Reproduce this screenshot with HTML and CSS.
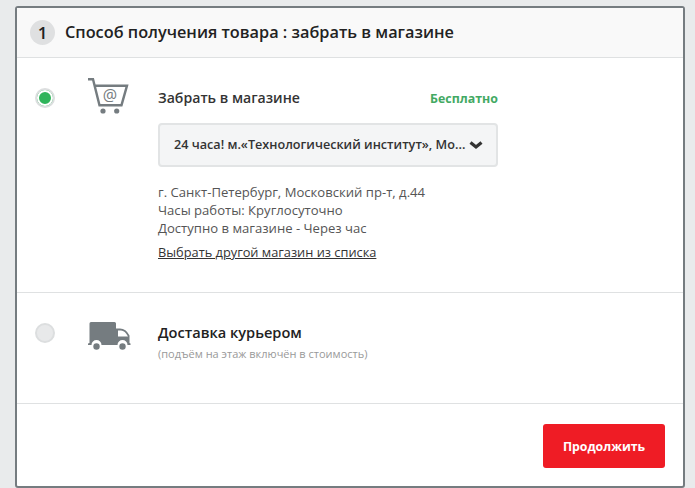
FILE: index.html
```html
<!DOCTYPE html>
<html lang="ru">
<head>
  <meta charset="UTF-8">
  <meta name="viewport" content="width=device-width, initial-scale=1.0">
  <title>Способ получения товара</title>
  <link rel="stylesheet" href="styles.css">
</head>
<body>
  <div class="card">
    <div class="card-header">
      <span class="step">1</span>
      <h2 class="card-title">Способ получения товара : забрать в магазине</h2>
    </div>

    <div class="option option-pickup">
      <span class="radio radio-on"></span>
      <svg class="icon-cart" width="42" height="38" viewBox="0 0 42 38">
        <path d="M1 1.200h5l6.500 26h22l5.500-19.500h-32" fill="none" stroke="#757c80" stroke-width="2.400"/>
        <circle cx="16" cy="33" r="2.600" fill="#757c80"/>
        <circle cx="29.700" cy="33" r="2.600" fill="#757c80"/>
        <text x="23" y="23" class="cart-at">@</text>
      </svg>
      <div class="option-body">
        <div class="option-head">
          <span class="option-title">Забрать в магазине</span>
          <span class="price">Бесплатно</span>
        </div>
        <div class="select">
          <span class="select-text">24 часа! м.«Технологический институт», Мо...</span>
          <svg class="select-arrow" width="14" height="10" viewBox="0 0 14 10">
            <path d="M1.500 2.500l5.500 4.500 5.500-4.500" fill="none" stroke="#333" stroke-width="3.200"/>
          </svg>
        </div>
        <div class="address">
          <div>г. Санкт-Петербург, Московский пр-т, д.44</div>
          <div>Часы работы: Круглосуточно</div>
          <div>Доступно в магазине - Через час</div>
        </div>
        <a class="other-shop" href="#">Выбрать другой магазин из списка</a>
      </div>
    </div>

    <div class="option option-courier">
      <span class="radio"></span>
      <svg class="icon-truck" width="44" height="30" viewBox="0 0 44 30">
        <path d="M2.500 2.500q0-1.500 1.500-1.500h23.500q1.500 0 1.500 1.500v5h4q6 0 9.500 7v7.500l1 .5v1.500h-3a5 5 0 0 0-10 0h-16a5 5 0 0 0-10 0h-3.500v-1.500l1.500-.5z" fill="#757c80"/>
        <path d="M31 9.500h3q4 0 7 6h-10z" fill="#fff"/>
        <circle cx="9.500" cy="25.500" r="3.200" fill="#757c80"/>
        <circle cx="35.500" cy="25.500" r="3.200" fill="#757c80"/>
      </svg>
      <div class="option-body option-body-courier">
        <div class="option-title option-title-lg">Доставка курьером</div>
        <div class="note">(подъём на этаж включён в стоимость)</div>
      </div>
    </div>

    <div class="card-footer">
      <button class="btn-next">Продолжить</button>
    </div>
  </div>
</body>
</html>
```

FILE: styles.css
```css
body {
  margin: 0;
  height: 488px;
  overflow: hidden;
  padding: 6px 10px 0 15px;
  box-sizing: border-box;
  background: #e9ebec;
  font-family: "Open Sans", sans-serif;
  color: #333;
}
.card {
  height: 482px;
  box-sizing: border-box;
  border: 2px solid #757c80;
  border-radius: 3px;
  background: #fff;
}
.card-header {
  display: flex;
  align-items: center;
  height: 50px;
  box-sizing: border-box;
  padding-left: 13px;
  background: #f9f9f9;
  border-bottom: 1px solid #dfe1e2;
}
.step {
  width: 25px;
  height: 25px;
  border-radius: 50%;
  margin-right: 10px;
  background: #dfe0e1;
  color: #222;
  font-size: 17px;
  font-weight: 600;
  line-height: 25px;
  text-align: center;
}
.card-title {
  margin: 0 0 2px;
  color: #222;
  font-size: 16.300px;
  font-weight: 600;
}
.option {
  display: flex;
  align-items: flex-start;
  box-sizing: border-box;
  padding-left: 18px;
  border-bottom: 1px solid #dfe1e2;
}
.option-pickup {
  height: 235px;
  padding-top: 20px;
}
.option-courier {
  height: 111px;
  padding-top: 28px;
}
.radio {
  flex: none;
  width: 20px;
  height: 20px;
  box-sizing: border-box;
  border: 2px solid #dcdedf;
  border-radius: 50%;
  background: #e8e9ea;
  margin-top: 10px;
}
.option-courier .radio {
  margin-top: 2px;
}
.radio-on {
  background: #2fb45a;
  box-shadow: inset 0 0 0 2px #fff;
}
.icon-cart {
  flex: none;
  margin: 0 29px 0 32px;
}
.icon-truck {
  flex: none;
  margin: 0 27px 0 32px;
}
.cart-at {
  fill: #757c80;
  font-size: 16px;
  text-anchor: middle;
}
.option-body {
  width: 340px;
}
.option-body-courier {
  margin-top: 1px;
}
.option-head {
  display: flex;
  justify-content: space-between;
  align-items: center;
  margin-top: 10px;
}
.option-title {
  color: #333;
  font-size: 14.100px;
  font-weight: 600;
  line-height: 20px;
}
.option-title-lg {
  color: #222;
  font-size: 14.600px;
}
.price {
  color: #43a963;
  font-size: 12.400px;
  font-weight: 700;
}
.select {
  display: flex;
  align-items: center;
  justify-content: space-between;
  height: 44px;
  box-sizing: border-box;
  margin-top: 15px;
  padding: 0 13px 0 14px;
  border: 2px solid #e2e4e5;
  border-radius: 4px;
  background: #f4f5f6;
}
.select-text {
  margin-bottom: 2px;
  color: #333;
  font-size: 12.650px;
  font-weight: 600;
  white-space: nowrap;
}
.address {
  margin-top: 16px;
  color: #555;
  font-size: 13.100px;
  line-height: 18px;
}
.other-shop {
  display: block;
  margin-top: 6px;
  color: #333;
  font-size: 12.800px;
  line-height: 18px;
}
.note {
  margin-top: 5px;
  color: #999;
  font-size: 11px;
  line-height: 14px;
}
.card-footer {
  display: flex;
  justify-content: flex-end;
  padding: 20px 18px 0 0;
}
.btn-next {
  width: 122px;
  height: 44px;
  border: none;
  border-radius: 3px;
  background: #ef1c25;
  color: #fff;
  font-family: "Open Sans", sans-serif;
  font-size: 12.300px;
  font-weight: 700;
}
```
